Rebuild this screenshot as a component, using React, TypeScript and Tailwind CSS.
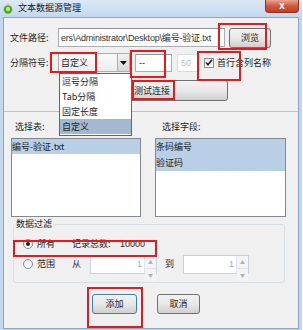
import React from "react";

const dropItems = ["逗号分隔", "Tab分隔", "固定长度", "自定义"];

function Radio({ on }: { on: boolean }) {
  return (
    <span className="w-[10px] h-[10px] rounded-full border border-[#7b8a9c] bg-gradient-to-b from-[#e4e8ee] to-white flex items-center justify-center">
      {on && <span className="w-[4px] h-[4px] rounded-full bg-[#1b1b1b]" />}
    </span>
  );
}

function Spinner({ w }: { w: string }) {
  return (
    <div className={`${w} h-[19px] border border-[#c9d3dd] bg-white flex`}>
      <div className="flex-1 flex items-center justify-end pr-[2px] text-[#a8a8a8] font-['Liberation_Sans',sans-serif]">1</div>
      <div className="w-[12px] flex flex-col border-l border-[#dde3ea]">
        <div className="flex-1 bg-[#f4f4f4] border-b border-[#dde3ea] flex items-center justify-center text-[5px] text-[#b0b0b0]">▲</div>
        <div className="flex-1 bg-[#f4f4f4] flex items-center justify-center text-[5px] text-[#b0b0b0]">▼</div>
      </div>
    </div>
  );
}

function Btn({ label, w, focus }: { label: string; w: string; focus?: boolean }) {
  return (
    <div
      className={`${w} h-[20px] rounded-[3px] border ${focus ? "border-[#3c7fb1]" : "border-[#707070]"} bg-gradient-to-b from-[#f2f2f2] via-[#e8e8e8] to-[#cfcfcf] flex items-center justify-center text-[#1e1e1e]`}
    >
      {label}
    </div>
  );
}

export default function App() {
  return (
    <div className="w-[303px] h-[330px] bg-white relative overflow-hidden text-[9px] leading-[12px] text-[#1e1e1e] font-['Noto_Sans_CJK_SC','Liberation_Sans',sans-serif]">
      <div className="w-[302px] h-[330px] bg-[#c2d6ec] px-[3px] flex flex-col">
        {/* title bar */}
        <div className="h-[17px] flex items-start -mx-[3px] bg-gradient-to-b from-[#dce9f6] to-[#c4d8ee]">
          <svg width="10" height="11" viewBox="0 0 10 11" className="ml-[3px] mt-[3px]">
            <ellipse cx="5" cy="6.5" rx="4.3" ry="4.2" fill="#4fa82c" />
            <ellipse cx="5" cy="6" rx="2.2" ry="2.3" fill="#b6e27a" />
            <path d="M3.5 2.4 L5 0.6 L6.5 2.4 Z" fill="#e0a23a" />
          </svg>
          <span className="ml-[5px] mt-[2px] text-[9px] text-[#1a1a1a]">文本数据源管理</span>
          <div className="ml-auto mr-[3px] w-[34px] h-[13px] rounded-b-[4px] border border-t-0 border-[#8c3424] bg-gradient-to-b from-[#e9a08f] via-[#d0583f] to-[#c0402a] flex items-center justify-center">
            <span className="text-white text-[10px] font-bold leading-[10px] font-['Liberation_Sans',sans-serif]">x</span>
          </div>
        </div>

        {/* client */}
        <div className="h-[312px] bg-[#f0f0f0] border border-[#8fa5be] flex flex-col">
          {/* row 1 */}
          <div className="mt-[10px] h-[19px] flex items-center pl-[6px]">
            <span className="w-[48px]">文件路径:</span>
            <div className="w-[167px] h-[19px] border border-[#abadb3] border-t-[#8e939c] bg-white flex items-center overflow-hidden pl-[2px]">
              <span className="whitespace-nowrap tracking-[-0.2px] font-['Liberation_Sans','Noto_Sans_CJK_SC',sans-serif] text-[#333]">
                ers\Administrator\Desktop\编号-验证.txt
              </span>
            </div>
            <div className="ml-[4px]">
              <Btn label="浏览" w="w-[42px]" />
            </div>
          </div>

          {/* row 2 */}
          <div className="mt-[6px] h-[19px] flex items-center pl-[6px]">
            <span className="w-[48px]">分隔符号:</span>
            <div className="w-[72px] h-[19px] border border-[#abadb3] flex bg-white">
              <div className="flex-1 flex items-center pl-[2px] bg-gradient-to-b from-[#fafafa] to-[#ececec]">自定义</div>
              <div className="w-[12px] border-l border-[#abadb3] bg-gradient-to-b from-[#f2f2f2] to-[#d6d6d6] flex items-center justify-center">
                <svg width="7" height="4" viewBox="0 0 7 4">
                  <path d="M0 0 H7 L3.5 4 Z" fill="#111" />
                </svg>
              </div>
            </div>
            <div className="ml-[5px] w-[37px] h-[18px] border border-[#abadb3] border-t-[#8e939c] bg-white flex items-center pl-[3px] font-['Liberation_Sans',sans-serif]">
              --
            </div>
            <div className="ml-[5px] w-[23px] h-[18px] border border-[#d4dde6] bg-white flex items-center pl-[3px] text-[#b3c2d3] font-['Liberation_Sans',sans-serif]">
              50
            </div>
            <div className="ml-[4px] w-[10px] h-[10px] border border-[#8f8f8f] bg-gradient-to-b from-[#e9e9e9] to-white flex items-center justify-center">
              <svg width="8" height="7" viewBox="0 0 8 7">
                <path d="M1 3.5 L3 5.8 L7 0.8" stroke="#222" strokeWidth="1.6" fill="none" />
              </svg>
            </div>
            <span className="ml-[3px]">首行含列名称</span>
          </div>

          {/* row 3 */}
          <div className="mt-[8px] h-[21px] flex pl-[72px]">
            <div className="w-[152px] h-[21px] rounded-[3px] border border-[#707070] bg-gradient-to-b from-[#f2f2f2] via-[#e8e8e8] to-[#cfcfcf] flex items-center justify-center">
              测试连接
            </div>
          </div>

          {/* lower panel */}
          <div className="mt-[10px] flex-1 border-t border-[#b8c4d0] flex flex-col">
            <div className="pt-[9px] pl-[7px] flex">
              <div className="w-[130px] flex flex-col">
                <span className="ml-[4px]">选择表:</span>
                <div className="mt-[5px] h-[79px] border border-[#828790] bg-white">
                  <div className="h-[15px] bg-[#b8cfe6] flex items-center">编号-验证.txt</div>
                </div>
              </div>
              <div className="ml-[14px] w-[131px] flex flex-col">
                <span className="ml-[7px]">选择字段:</span>
                <div className="mt-[5px] h-[79px] border border-[#828790] bg-white">
                  <div className="h-[16px] bg-[#b8cfe6] flex items-center">条码编号</div>
                  <div className="h-[16px] bg-[#b8cfe6] flex items-center">验证码</div>
                </div>
              </div>
            </div>

            {/* group box */}
            <fieldset className="mt-[1px] ml-[9px] w-[272px] border border-[#d5dfe5] rounded-[3px] pb-[8px]">
              <legend className="ml-[1px] px-[1px] text-[#1e1e1e]">数据过滤</legend>
              <div className="pl-[9px]">
                <div className="mt-[6px] h-[16px] flex items-center">
                  <div className="w-[49px] flex items-center">
                    <Radio on />
                    <span className="ml-[4px]">所有</span>
                  </div>
                  <span className="w-[48px]">记录总数:</span>
                  <span className="font-['Liberation_Sans',sans-serif]">10000</span>
                </div>
                <div className="mt-[2px] h-[20px] flex items-center">
                  <div className="w-[49px] flex items-center">
                    <Radio on={false} />
                    <span className="ml-[4px]">范围</span>
                  </div>
                  <span className="w-[18px]">从</span>
                  <Spinner w="w-[67px]" />
                  <span className="ml-[8px] w-[18px]">到</span>
                  <Spinner w="w-[66px]" />
                </div>
              </div>
            </fieldset>

            <div className="mt-[11px] pl-[88px] flex gap-[20px]">
              <Btn label="添加" w="w-[45px]" focus />
              <Btn label="取消" w="w-[43px]" />
            </div>
          </div>
        </div>
      </div>

      {/* combo popup */}
      <div className="absolute left-[59px] top-[73px] w-[73px] h-[63px] border border-[#646464] bg-white flex flex-col">
        {dropItems.map((it, i) => (
          <div
            key={it}
            className={`h-[15px] flex items-center pl-[2px] ${i === 3 ? "bg-[#a3b7d0]" : ""}`}
          >
            {it}
          </div>
        ))}
      </div>

      {/* red marks */}
      <div className="absolute left-[218px] top-[23px] w-[49px] h-[27px] border-2 border-[#e8191c]" />
      <div className="absolute left-[50px] top-[52px] w-[47px] h-[21px] border-2 border-[#e8191c]" />
      <div className="absolute left-[130px] top-[50px] w-[36px] h-[28px] border-2 border-[#e8191c]" />
      <div className="absolute left-[197px] top-[51px] w-[44px] h-[30px] border-2 border-[#e8191c]" />
      <div className="absolute left-[132px] top-[80px] w-[43px] h-[20px] border-2 border-[#e8191c]" />
      <div className="absolute left-[13px] top-[240px] w-[144px] h-[17px] border-2 border-[#e8191c]" />
      <div className="absolute left-[87px] top-[287px] w-[56px] h-[41px] border-2 border-[#e8191c]" />
    </div>
  );
}
